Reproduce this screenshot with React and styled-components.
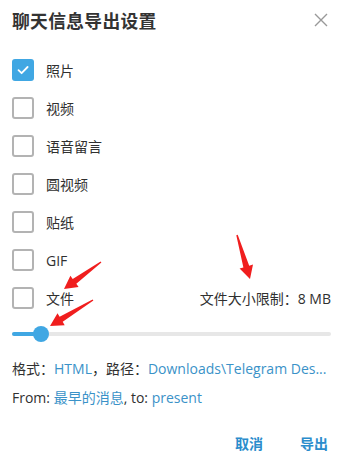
import React from "react";
import styled, { createGlobalStyle } from "styled-components";

const GlobalStyle = createGlobalStyle`
  html, body {
    margin: 0;
    padding: 0;
    background: #ffffff;
  }
  body {
    font-family: "Open Sans", "Noto Sans CJK SC", sans-serif;
    color: #303030;
  }
`;

const Dialog = styled.div`
  position: relative;
  width: 341px;
  height: 458px;
  box-sizing: border-box;
  padding: 0 10px 0 12px;
  background: #fff;
  display: flex;
  flex-direction: column;
`;

const Header = styled.div`
  display: flex;
  align-items: center;
  justify-content: space-between;
  height: 40px;
`;

const Title = styled.h2`
  margin: 0;
  font-size: 17.8px;
  font-weight: 700;
  color: #333;
  letter-spacing: 0.3px;
`;

const Close = styled.button`
  border: 0;
  background: none;
  padding: 0;
  width: 18px;
  height: 18px;
  margin-right: 1px;
  display: flex;
  align-items: center;
  justify-content: center;
`;

const Options = styled.div`
  display: flex;
  flex-direction: column;
  gap: 16px;
  margin-top: 19px;
`;

const Row = styled.div`
  display: flex;
  align-items: center;
  height: 22px;
`;

const Box = styled.span`
  width: 22px;
  height: 22px;
  box-sizing: border-box;
  border-radius: 3px;
  border: ${(p) => (p.checked ? "none" : "2px solid #b3b3b3")};
  background: ${(p) => (p.checked ? "#40a7e3" : "#fff")};
  display: flex;
  align-items: center;
  justify-content: center;
  flex-shrink: 0;
`;

const Label = styled.span`
  margin-left: 12px;
  font-size: 14px;
  color: #303030;
  flex: 1;
`;

const SizeLimit = styled.span`
  font-size: 14px;
  color: #303030;
`;

const Slider = styled.div`
  height: 16px;
  margin-top: 17px;
  display: flex;
  align-items: center;
`;

const Track = styled.div`
  flex: 1;
  height: 4px;
  border-radius: 2px;
  background: #e7e7e7;
  position: relative;
`;

const Fill = styled.div`
  height: 4px;
  border-radius: 2px;
  background: #40a7e3;
`;

const Thumb = styled.div`
  position: absolute;
  top: 50%;
  width: 16px;
  height: 16px;
  border-radius: 50%;
  background: #40a7e3;
  transform: translate(-50%, -50%);
`;

const Info = styled.div`
  font-size: 14px;
  color: #303030;
  white-space: nowrap;
  overflow: hidden;
  line-height: 20px;
  margin-top: ${(p) => p.gap}px;
`;

const Link = styled.span`
  color: #3a92c8;
`;

const Footer = styled.div`
  display: flex;
  justify-content: flex-end;
  gap: 37px;
  margin-top: 25px;
  padding-right: 3px;
`;

const Action = styled.button`
  border: 0;
  background: none;
  padding: 0;
  font-family: inherit;
  font-size: 14px;
  font-weight: 700;
  color: #2a8ccc;
`;

const Overlay = styled.svg`
  position: absolute;
  left: 0;
  top: 0;
  width: 341px;
  height: 458px;
  pointer-events: none;
`;

// red annotation arrow: thin tail widening into a head at the tip
const arrowPoints = ([tx, ty], [px, py]) => {
  const len = Math.hypot(px - tx, py - ty);
  const dx = (px - tx) / len;
  const dy = (py - ty) / len;
  const nx = -dy;
  const ny = dx;
  const hl = 13;
  const bx = px - dx * hl;
  const by = py - dy * hl;
  const pts = [
    [tx + nx * 0.7, ty + ny * 0.7],
    [bx + nx * 3, by + ny * 3],
    [bx + nx * 7, by + ny * 7],
    [px, py],
    [bx - nx * 7, by - ny * 7],
    [bx - nx * 3, by - ny * 3],
    [tx - nx * 0.7, ty - ny * 0.7],
  ];
  return pts.map((p) => p.map((v) => v.toFixed(1)).join(",")).join(" ");
};

const arrows = [
  [[101, 262], [64, 289]],
  [[93, 300], [50, 326]],
  [[237, 235], [250, 279]],
];

const options = [
  { id: 1, label: "照片", checked: true },
  { id: 2, label: "视频" },
  { id: 3, label: "语音留言" },
  { id: 4, label: "圆视频" },
  { id: 5, label: "贴纸" },
  { id: 6, label: "GIF" },
  { id: 7, label: "文件", extra: "文件大小限制：8 MB" },
];

const Check = () => (
  <svg width="14" height="14" viewBox="0 0 14 14">
    <path d="M2.5 7.2 L5.6 10.2 L11.6 4" fill="none" stroke="#fff" strokeWidth="1.8" strokeLinecap="round" strokeLinejoin="round" />
  </svg>
);

export default function App() {
  const value = 0.09;
  return (
    <>
      <GlobalStyle />
      <Dialog>
        <Header>
          <Title>聊天信息导出设置</Title>
          <Close>
            <svg width="14" height="14" viewBox="0 0 14 14">
              <path d="M1 1 L13 13 M13 1 L1 13" stroke="#999" strokeWidth="1.4" />
            </svg>
          </Close>
        </Header>
        <Options>
          {options.map((o) => (
            <Row key={o.id}>
              <Box checked={o.checked}>{o.checked && <Check />}</Box>
              <Label>{o.label}</Label>
              {o.extra && <SizeLimit>{o.extra}</SizeLimit>}
            </Row>
          ))}
        </Options>
        <Slider>
          <Track>
            <Fill style={{ width: `${value * 100}%` }} />
            <Thumb style={{ left: `${value * 100}%` }} />
          </Track>
        </Slider>
        <Info gap={17}>
          格式：<Link>HTML</Link>，路径：<Link>Downloads\Telegram Des...</Link>
        </Info>
        <Info gap={9}>
          From: <Link>最早的消息</Link>, to: <Link>present</Link>
        </Info>
        <Footer>
          <Action>取消</Action>
          <Action>导出</Action>
        </Footer>
        <Overlay viewBox="0 0 341 458">
          {arrows.map(([t, p], i) => (
            <polygon key={i} points={arrowPoints(t, p)} fill="#f01e1e" />
          ))}
        </Overlay>
      </Dialog>
    </>
  );
}
